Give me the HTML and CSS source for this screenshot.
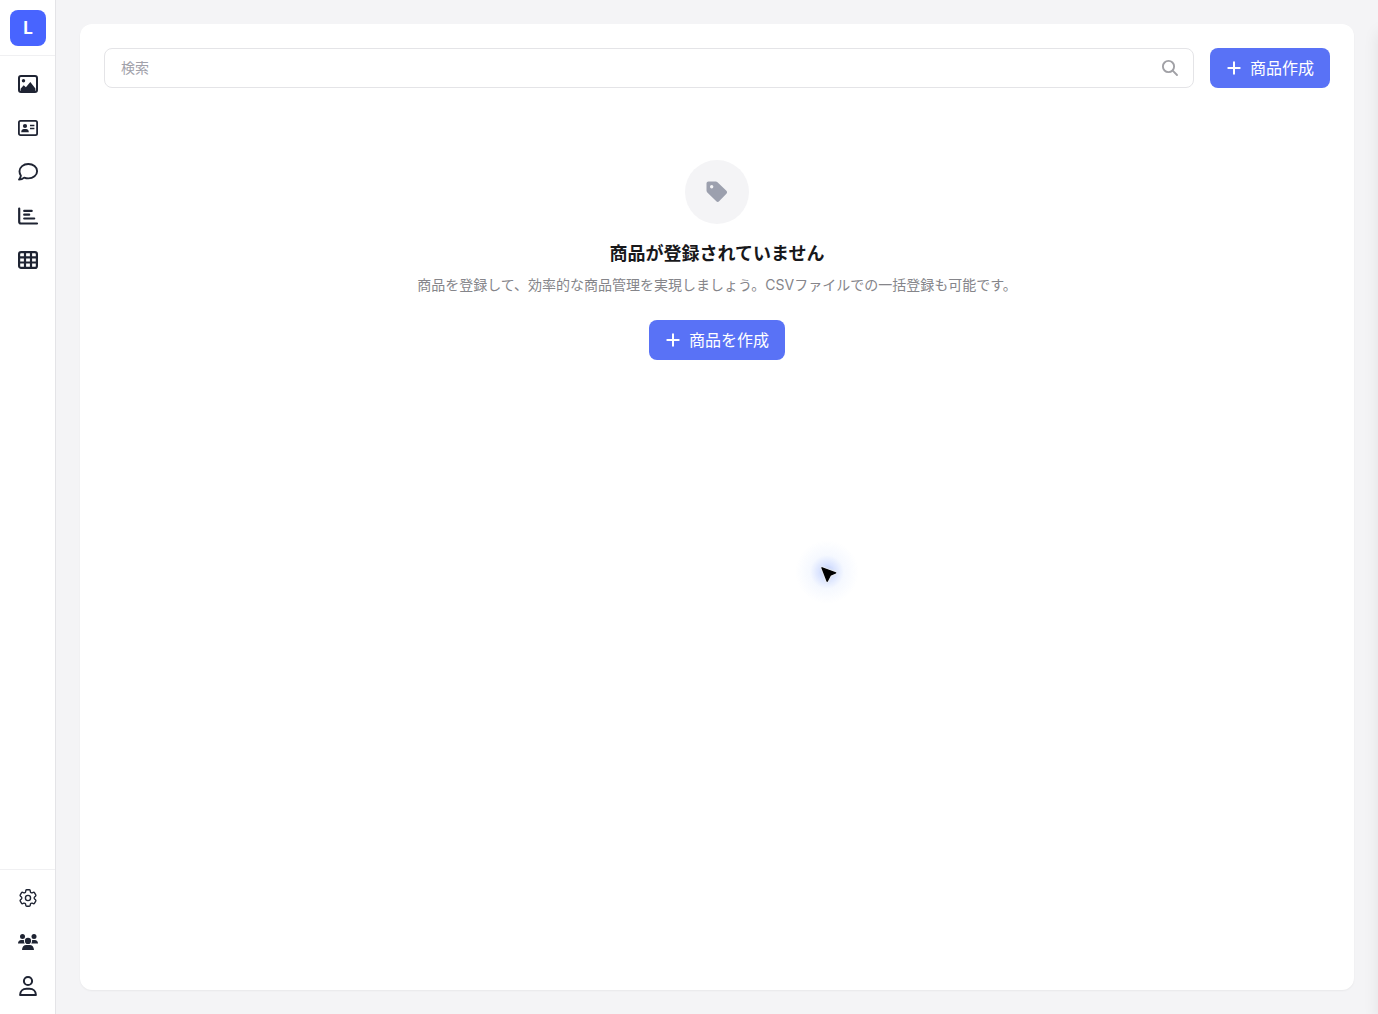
FILE: index.html
```html
<!DOCTYPE html>
<html lang="ja">
<head>
    <meta charset="UTF-8">
    <meta name="viewport" content="width=device-width, initial-scale=1.0">
    <title>商品</title>
    <link rel="stylesheet" href="styles.css">
</head>
<body>
    <div class="app">
        <aside class="sidebar">
            <div class="sidebar-logo">
                <a href="#" class="logo">L</a>
            </div>
            <nav class="sidebar-nav">
                <a href="#" class="nav-item">
                    <svg width="22" height="22" viewBox="0 0 22 22" fill="none">
                        <rect x="2" y="3" width="18" height="16" rx="2" stroke="currentColor" stroke-width="2"/>
                        <circle cx="6.5" cy="7.8" r="1.7" fill="currentColor"/>
                        <path d="M3.6 18v-2.2l3.1-3.6 2.2 2 4.4-5.2 5.1 6.4V18z" fill="currentColor"/>
                    </svg>
                </a>
                <a href="#" class="nav-item">
                    <svg width="22" height="22" viewBox="0 0 22 22" fill="none" stroke="currentColor">
                        <rect x="1.9" y="3.9" width="18.2" height="14.2" rx="1.6" stroke-width="1.8"/>
                        <circle cx="8" cy="9" r="2.1" fill="currentColor" stroke="none"/>
                        <path d="M4.2 15.2c0-2 1.2-3.2 2.7-3.2h2.2c1.5 0 2.7 1.2 2.7 3.2z" fill="currentColor" stroke="none"/>
                        <path d="M13 8.5h4.4M13 11.5h4.4" stroke-width="1.7"/>
                    </svg>
                </a>
                <a href="#" class="nav-item">
                    <svg width="22" height="22" viewBox="0 0 22 22" fill="none" stroke="currentColor" stroke-width="1.9" stroke-linejoin="round">
                        <path d="M11.3 3c4.9 0 8.8 3.2 8.8 7.2s-3.9 7.2-8.8 7.2c-1.5 0-2.9-.3-4.1-.8-1.4 1.3-3.200 2-5.200 2 1-1 1.700-2.300 1.900-3.900-.9-1.200-1.400-2.800-1.400-4.400C2.500 6.200 6.400 3 11.300 3z"/>
                    </svg>
                </a>
                <a href="#" class="nav-item">
                    <svg width="22" height="22" viewBox="0 0 22 22" fill="none" stroke="currentColor" stroke-width="2.2" stroke-linecap="round" stroke-linejoin="round">
                        <path d="M2.2 3.5v13.3c0 1.1.6 1.7 1.7 1.7H20M7.200 5.900h7.500M7.200 9.700h5M7.200 13.500h10"/>
                    </svg>
                </a>
                <a href="#" class="nav-item">
                    <svg width="22" height="22" viewBox="0 0 22 22" fill="none" stroke="currentColor" stroke-width="2.2">
                        <rect x="2.1" y="3.1" width="17.8" height="15.8" rx="2"/>
                        <path d="M2 8.3h18M2 13.5h18M8 3.2v15.600M14 3.200v15.600"/>
                    </svg>
                </a>
            </nav>
            <div class="sidebar-footer">
                <a href="#" class="nav-item">
                    <svg width="22" height="22" viewBox="0 0 24 24" fill="none" stroke="currentColor" stroke-width="1.5" stroke-linejoin="round">
                        <path d="M9.594 3.940c.09-.542.560-.940 1.110-.940h2.593c.550 0 1.020.398 1.110.940l.213 1.281c.063.374.313.686.645.870.074.040.147.083.220.127.324.196.720.257 1.075.124l1.217-.456a1.125 1.125 0 0 1 1.370.490l1.296 2.247a1.125 1.125 0 0 1-.260 1.431l-1.003.827c-.293.240-.438.613-.431.992v.255c-.007.378.138.750.430.990l1.005.828c.424.350.534.954.260 1.430l-1.298 2.247a1.125 1.125 0 0 1-1.369.491l-1.217-.456c-.355-.133-.750-.072-1.076.124a6.570 6.570 0 0 1-.220.128c-.331.183-.581.495-.644.869l-.213 1.280c-.090.543-.560.941-1.110.941h-2.594c-.550 0-1.020-.398-1.110-.940l-.213-1.281c-.062-.374-.312-.686-.644-.870a6.520 6.520 0 0 1-.220-.127c-.325-.196-.720-.257-1.076-.124l-1.217.456a1.125 1.125 0 0 1-1.369-.490l-1.297-2.247a1.125 1.125 0 0 1 .260-1.431l1.004-.827c.292-.240.437-.613.430-.992a6.930 6.930 0 0 1 0-.255c.007-.378-.138-.750-.430-.990l-1.004-.828a1.125 1.125 0 0 1-.260-1.430l1.297-2.247a1.125 1.125 0 0 1 1.370-.491l1.216.456c.356.133.751.072 1.076-.124.072-.044.146-.087.220-.128.332-.183.582-.495.644-.869z"/>
                        <circle cx="12" cy="12" r="2.8"/>
                    </svg>
                </a>
                <a href="#" class="nav-item">
                    <svg width="22" height="22" viewBox="0 0 22 22" fill="currentColor">
                        <circle cx="5.5" cy="5.5" r="2.5"/>
                        <circle cx="17" cy="5.5" r="2.5"/>
                        <circle cx="11" cy="9.9" r="3.1"/>
                        <path d="M1 12.4c0-2 1.400-3.400 3.200-3.400h1.700c.4 0 .8.100 1.100.2-.2 1.300.1 2.400.8 3.200zM21 12.400c0-2-1.400-3.400-3.200-3.400h-1.700c-.4 0-.8.100-1.100.2.2 1.300-.1 2.400-.8 3.200zM5 19c0-2.900 1.900-4.900 4.300-4.900h3.400c2.400 0 4.300 2 4.300 4.900z"/>
                    </svg>
                </a>
                <a href="#" class="nav-item">
                    <svg width="22" height="22" viewBox="0 0 22 22" fill="none" stroke="currentColor" stroke-width="2" stroke-linejoin="round">
                        <circle cx="11" cy="6" r="4.1"/>
                        <path d="M3.1 20c0-3.9 2.8-6.200 6.400-6.200h3c3.600 0 6.400 2.300 6.400 6.200z"/>
                    </svg>
                </a>
            </div>
        </aside>

        <main class="main">
            <section class="card">
                <div class="toolbar">
                    <div class="search-box">
                        <input type="text" class="search-input" placeholder="検索">
                        <svg class="search-icon" width="18" height="18" viewBox="0 0 18 18" fill="none" stroke="currentColor" stroke-width="1.9" stroke-linecap="round">
                            <circle cx="7.5" cy="7.5" r="5.6"/>
                            <path d="M11.7 11.7l4.3 4.3"/>
                        </svg>
                    </div>
                    <button type="button" class="btn">
                        <svg width="16" height="16" viewBox="0 0 16 16" fill="none" stroke="currentColor" stroke-width="2" stroke-linecap="round">
                            <path d="M8 2.300v11.400M2.300 8h11.400"/>
                        </svg>
                        <span>商品作成</span>
                    </button>
                </div>

                <div class="empty">
                    <div class="empty-icon">
                        <svg width="24" height="24" viewBox="0 0 24 24" fill="currentColor">
                            <path fill-rule="evenodd" d="M1.5 3.500c0-1.200.9-2 2-2h7.200c.7 0 1.300.3 1.800.7l8.900 8.600c.9.900.9 2.100 0 3l-7.300 7.500c-.8.800-2 .8-2.800 0l-9-8.900c-.5-.5-.8-1.100-.8-1.800zM6.700 5.100a1.700 1.700 0 1 0 0 3.400 1.700 1.700 0 0 0 0-3.400z"/>
                        </svg>
                    </div>
                    <h3 class="empty-title">商品が登録されていません</h3>
                    <p class="empty-text">商品を登録して、効率的な商品管理を実現しましょう。CSVファイルでの一括登録も可能です。</p>
                    <button type="button" class="btn">
                        <svg width="16" height="16" viewBox="0 0 16 16" fill="none" stroke="currentColor" stroke-width="2" stroke-linecap="round">
                            <path d="M8 2.300v11.400M2.300 8h11.400"/>
                        </svg>
                        <span>商品を作成</span>
                    </button>
                </div>
            </section>
        </main>
    </div>

    <div class="drawer-shadow"></div>
    <div class="cursor">
        <svg class="cursor-arrow" width="22" height="22" viewBox="0 0 22 22">
            <path d="M4 4.800l13.600 5-5.300 2.400-3.100 6z" fill="#000" stroke="#000" stroke-width="1.400" stroke-linejoin="round"/>
        </svg>
    </div>
</body>
</html>
```

FILE: styles.css
```css
* {
    margin: 0;
    padding: 0;
    box-sizing: border-box;
}

body {
    font-family: Inter, "Noto Sans CJK JP", sans-serif;
    background: #f4f4f6;
    color: #18181b;
    overflow: hidden;
}

a {
    color: inherit;
    text-decoration: none;
}

svg {
    display: block;
    flex-shrink: 0;
}

.app {
    display: flex;
    height: 100vh;
}

/* sidebar */
.sidebar {
    display: flex;
    flex-direction: column;
    width: 56px;
    background: #fff;
    border-right: 1px solid #e4e4e7;
    color: #1f2433;
}

.sidebar-logo {
    height: 56px;
    padding: 10px 0 0 10px;
    border-bottom: 1px solid #f0f0f2;
}

.logo {
    display: flex;
    align-items: center;
    justify-content: center;
    width: 36px;
    height: 36px;
    border-radius: 8px;
    background: #4864ff;
    color: #fff;
    font-size: 17px;
    font-weight: 700;
}

.sidebar-nav {
    flex: 1;
    padding: 8px 0 0 8px;
}

.sidebar-footer {
    height: 145px;
    padding: 8px 0 0 8px;
    border-top: 1px solid #f0f0f2;
}

.nav-item {
    display: flex;
    align-items: center;
    justify-content: center;
    width: 40px;
    height: 40px;
    margin-bottom: 4px;
}

/* content */
.main {
    flex: 1;
    display: flex;
    padding: 24px;
}

.card {
    flex: 1;
    padding: 24px;
    background: #fff;
    border-radius: 12px;
    box-shadow: 0 1px 2px rgba(0, 0, 0, 0.05);
}

.toolbar {
    display: flex;
    gap: 16px;
}

.search-box {
    flex: 1;
    display: flex;
    align-items: center;
    height: 40px;
    padding: 0 14px 0 16px;
    border: 1px solid #e4e4e7;
    border-radius: 8px;
}

.search-input {
    flex: 1;
    padding-bottom: 1px;
    border: none;
    outline: none;
    background: none;
    font-family: inherit;
    font-size: 14px;
}

.search-input::placeholder {
    color: #a1a1aa;
}

.search-icon {
    color: #a1a1a6;
}

.btn {
    display: flex;
    align-items: center;
    gap: 8px;
    height: 40px;
    padding: 0 16px;
    border: none;
    border-radius: 8px;
    background: #5972f6;
    color: #fff;
    font-family: inherit;
    font-size: 16px;
    line-height: 24px;
    white-space: nowrap;
    cursor: pointer;
}

.empty {
    display: flex;
    flex-direction: column;
    align-items: center;
    padding-top: 72px;
}

.empty-icon {
    display: flex;
    align-items: center;
    justify-content: center;
    width: 64px;
    height: 64px;
    margin-bottom: 16px;
    border-radius: 50%;
    background: #f4f4f6;
    color: #9ca0ae;
}

.empty-title {
    margin-bottom: 6px;
    font-size: 18px;
    font-weight: 600;
    line-height: 28px;
}

.empty-text {
    margin-bottom: 24px;
    color: #85858a;
    font-size: 14px;
    line-height: 22px;
}

/* overlays */
.drawer-shadow {
    position: fixed;
    top: 24px;
    right: -20px;
    bottom: 0;
    width: 20px;
    box-shadow: 0 8px 16px rgba(0, 0, 0, 0.08);
}

.cursor {
    position: fixed;
    left: 818px;
    top: 563px;
}

.cursor-arrow {
    filter: drop-shadow(0 0 1px #fff) drop-shadow(0 0 1px #ddd);
}

.cursor::before {
    content: "";
    position: absolute;
    left: -26px;
    top: -26px;
    z-index: -1;
    width: 70px;
    height: 70px;
    border-radius: 50%;
    background: radial-gradient(circle, rgba(72, 120, 255, 0.4) 0%, rgba(72, 120, 255, 0.2) 16%, rgba(72, 130, 255, 0.05) 34%, rgba(72, 140, 255, 0) 64%);
}
```
